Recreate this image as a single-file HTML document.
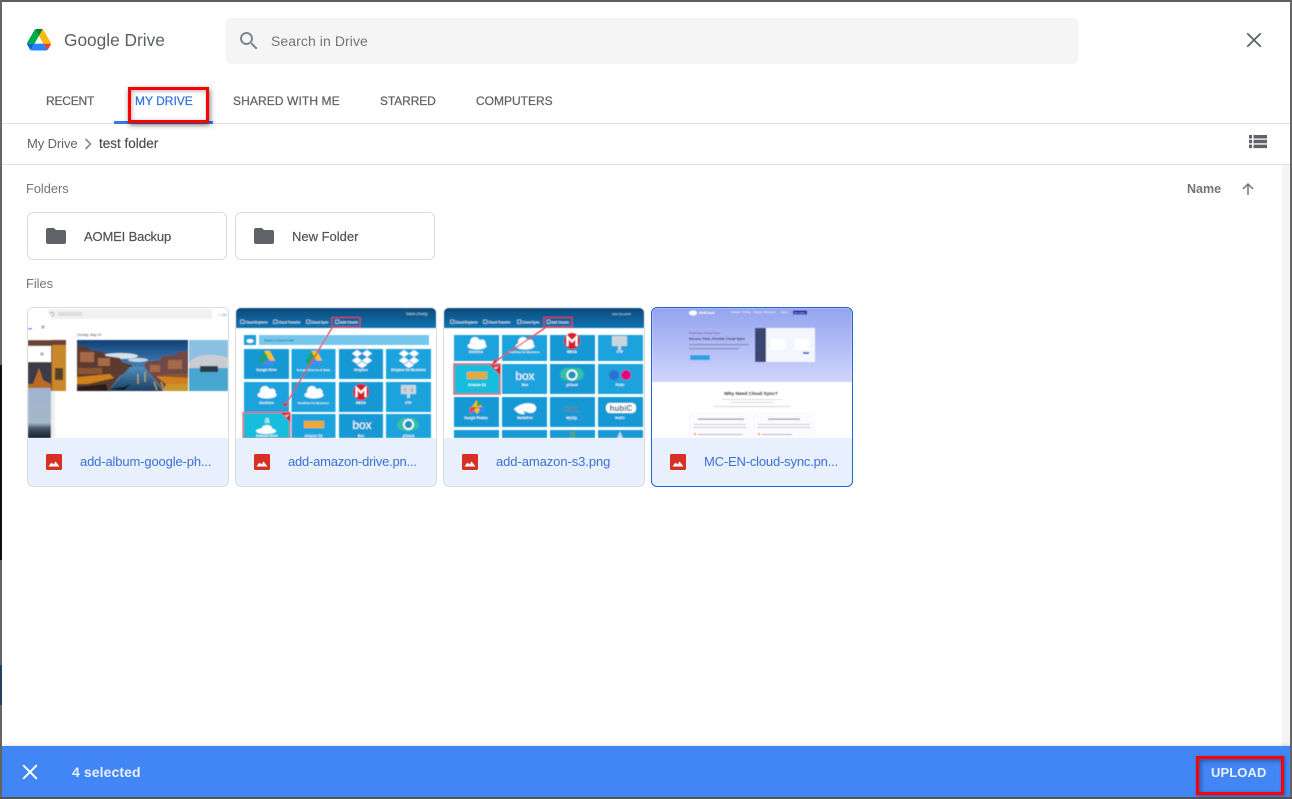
<!DOCTYPE html>
<html>
<head>
<meta charset="utf-8">
<style>
html,body{margin:0;padding:0;width:1292px;height:799px;overflow:hidden;background:#fff;font-family:"Liberation Sans",sans-serif}
.a{position:absolute}
.t{position:absolute;white-space:nowrap;line-height:16px}
.tab{font-size:12px;color:#5f6368;top:93px;font-weight:400;-webkit-text-stroke:.25px #5f6368}
.folder{position:absolute;top:212px;width:198px;height:46px;border:1px solid #dadce0;border-radius:6px;background:#fff}
.card{position:absolute;top:307px;width:200px;height:178px;border:1px solid #dadce0;border-radius:6px;overflow:hidden;background:#e8f0fe}
.card svg.th{position:absolute;left:0;top:0;width:200px;height:130px;background:#fff}
.card .ic{position:absolute;left:18px;top:146px}
.card .nm{position:absolute;left:52px;top:146px;font-size:13px;line-height:16px;color:#3b6fd4;white-space:nowrap}
svg text{font-family:"Liberation Sans",sans-serif}
</style>
</head>
<body>
<!-- window edges -->
<div class="a" style="left:0;top:0;width:1292px;height:2px;background:#5f5f5f"></div>
<div class="a" style="left:0;top:0;width:2px;height:799px;background:#666"></div>
<div class="a" style="left:0;top:365px;width:2px;height:195px;background:#111"></div>
<div class="a" style="left:0;top:665px;width:2px;height:40px;background:#23425f"></div>
<div class="a" style="left:1290px;top:0;width:2px;height:799px;background:#666"></div>
<div class="a" style="left:0;top:797px;width:1292px;height:2px;background:#555"></div>

<!-- header -->
<svg class="a" style="left:27px;top:29px" width="24" height="21.5" viewBox="0 0 87.3 78">
<path d="m6.6 66.85 3.85 6.65c.8 1.4 1.95 2.5 3.3 3.3l13.75-23.8h-27.5c0 1.55.4 3.1 1.2 4.5z" fill="#0066da"/>
<path d="m43.65 25-13.75-23.8c-1.35.8-2.5 1.9-3.3 3.3l-25.4 44a9.06 9.06 0 0 0 -1.2 4.5h27.5z" fill="#00ac47"/>
<path d="m73.55 76.8c1.35-.8 2.5-1.9 3.3-3.3l1.6-2.75 7.65-13.25c.8-1.4 1.2-2.95 1.2-4.5h-27.502l5.852 11.5z" fill="#ea4335"/>
<path d="m43.65 25 13.75-23.8c-1.35-.8-2.9-1.2-4.5-1.2h-18.5c-1.6 0-3.15.45-4.5 1.2z" fill="#00832d"/>
<path d="m59.8 53h-32.3l-13.75 23.8c1.35.8 2.9 1.2 4.5 1.2h50.8c1.6 0 3.15-.45 4.5-1.2z" fill="#2684fc"/>
<path d="m73.4 26.5-12.7-22c-.8-1.4-1.95-2.5-3.3-3.3l-13.75 23.8 16.15 28h27.45c0-1.55-.4-3.1-1.2-4.5z" fill="#ffba00"/>
</svg>
<div class="t" style="left:64px;top:30px;font-size:17.3px;line-height:20px;color:#5a5e63">Google Drive</div>

<div class="a" style="left:226px;top:18px;width:852px;height:46px;background:#f5f5f5;border-radius:4px"></div>
<svg class="a" style="left:237px;top:29px" width="24" height="24" viewBox="0 0 24 24"><path d="M15.5 14h-.79l-.28-.27A6.47 6.47 0 0 0 16 9.5 6.5 6.5 0 1 0 9.5 16c1.61 0 3.09-.59 4.23-1.57l.27.28v.79l5 4.99L20.49 19l-4.99-5zm-6 0C7.01 14 5 11.99 5 9.5S7.01 5 9.5 5 14 7.01 14 9.5 11.99 14 9.5 14z" fill="#80868b"/></svg>
<div class="t" style="left:271px;top:33px;font-size:14px;color:#70757a;letter-spacing:.08px">Search in Drive</div>
<svg class="a" style="left:1244px;top:30px" width="20" height="20" viewBox="0 0 20 20"><path d="M3.2 3.2 16.8 16.8M16.8 3.2 3.2 16.8" stroke="#5f6368" stroke-width="1.8" fill="none"/></svg>

<!-- tabs -->
<div class="t tab" style="left:46px;letter-spacing:-.2px">RECENT</div>
<div class="t tab" style="left:135px;color:#2f72e0;-webkit-text-stroke:.25px #2f72e0">MY DRIVE</div>
<div class="t tab" style="left:233px;letter-spacing:.1px">SHARED WITH ME</div>
<div class="t tab" style="left:380px;letter-spacing:-.1px">STARRED</div>
<div class="t tab" style="left:476px">COMPUTERS</div>
<div class="a" style="left:2px;top:123px;width:1288px;height:1px;background:#e0e0e0"></div>
<div class="a" style="left:114px;top:121px;width:99px;height:3px;background:#3b78e7"></div>

<!-- breadcrumb -->
<div class="t" style="left:27px;top:136px;font-size:13px;color:#5f6368;letter-spacing:-.1px">My Drive</div>
<svg class="a" style="left:83px;top:137px" width="10" height="14" viewBox="0 0 10 14"><path d="M2.5 2 7.5 7 2.5 12" stroke="#80868b" stroke-width="1.6" fill="none"/></svg>
<div class="t" style="left:99px;top:136px;font-size:13.5px;color:#4a4e52;-webkit-text-stroke:.2px #4a4e52">test folder</div>
<svg class="a" style="left:1249px;top:135px" width="18" height="14" viewBox="0 0 18 14"><path d="M0 0h3v3.500H0zM4.500 0H18v3.500H4.500zM0 4.800h3v3.500H0zM4.500 4.800H18v3.500H4.500zM0 9.600h3v3.500H0zM4.500 9.600H18v3.500H4.500z" fill="#5f6368"/></svg>
<div class="a" style="left:2px;top:164px;width:1288px;height:1px;background:#e0e0e0"></div>

<!-- scrollbar strip -->
<div class="a" style="left:1282px;top:165px;width:8px;height:581px;background:#f4f4f4"></div>

<!-- sections -->
<div class="t" style="left:26px;top:181px;font-size:12.8px;color:#70757a">Folders</div>
<div class="t" style="left:1187px;top:181px;font-size:12.5px;font-weight:700;color:#70757a">Name</div>
<svg class="a" style="left:1240px;top:181px" width="16" height="16" viewBox="0 0 16 16"><path d="M8 14V3M3 8l5-5 5 5" stroke="#70757a" stroke-width="1.5" fill="none"/></svg>

<div class="folder" style="left:27px"></div>
<div class="folder" style="left:235px"></div>
<svg class="a" style="left:46px;top:228px" width="20" height="16" viewBox="0 0 20 16"><path d="M2 0h6l2 2h8a2 2 0 0 1 2 2v10a2 2 0 0 1-2 2H2a2 2 0 0 1-2-2V2a2 2 0 0 1 2-2z" fill="#5f6368"/></svg>
<svg class="a" style="left:254px;top:228px" width="20" height="16" viewBox="0 0 20 16"><path d="M2 0h6l2 2h8a2 2 0 0 1 2 2v10a2 2 0 0 1-2 2H2a2 2 0 0 1-2-2V2a2 2 0 0 1 2-2z" fill="#5f6368"/></svg>
<div class="t" style="left:84px;top:229px;font-size:13px;color:#4f5357;-webkit-text-stroke:.2px #4f5357;letter-spacing:-.15px">AOMEI Backup</div>
<div class="t" style="left:292px;top:229px;font-size:13px;color:#4f5357;-webkit-text-stroke:.2px #4f5357">New Folder</div>

<div class="t" style="left:26px;top:276px;font-size:12.8px;color:#70757a">Files</div>

<svg width="0" height="0" style="position:absolute"><defs>
<filter id="b" x="-5%" y="-5%" width="110%" height="110%"><feGaussianBlur stdDeviation=".4"/></filter>
<linearGradient id="hd" x1="0" y1="0" x2="0" y2="1"><stop offset="0" stop-color="#0a4a7a"/><stop offset="1" stop-color="#0f74b3"/></linearGradient>
<linearGradient id="pv" x1="0" y1="0" x2="0" y2="1"><stop offset="0" stop-color="#94a4ef"/><stop offset="1" stop-color="#d0d4fc"/></linearGradient>
<linearGradient id="sk" x1="0" y1="0" x2="0" y2="1"><stop offset="0" stop-color="#123f78"/><stop offset=".45" stop-color="#3f78ad"/><stop offset="1" stop-color="#5f8fb6"/></linearGradient>
<linearGradient id="wt" x1="0" y1="0" x2="0" y2="1"><stop offset="0" stop-color="#4f8fbd"/><stop offset="1" stop-color="#1b3f60"/></linearGradient>
<linearGradient id="gr" x1="0" y1="0" x2="0" y2="1"><stop offset="0" stop-color="#9fb5cf"/><stop offset=".7" stop-color="#a6b7c9"/><stop offset=".8" stop-color="#4b5a6b"/><stop offset="1" stop-color="#14202e"/></linearGradient>
</defs></svg>

<!-- card 1 -->
<div class="card" style="left:27px">
<svg class="th" viewBox="0 0 200 130"><g filter="url(#b)">
<rect x="20" y="1" width="164" height="10" fill="#f1f1f1"/>
<circle cx="24" cy="6" r="1.800" fill="none" stroke="#777" stroke-width=".7"/>
<rect x="30" y="4" width="24" height="4" fill="#ddd"/>
<text x="190" y="8" font-size="4" fill="#4a86e8">+ cre</text>
<text x="49" y="28" font-size="3.400" fill="#555">Sunday, May 24</text>
<!-- venice -->
<rect x="49" y="32" width="111" height="51" fill="url(#sk)"/>
<ellipse cx="92" cy="48" rx="18" ry="3" fill="#d5e2ec"/>
<ellipse cx="110" cy="52" rx="10" ry="2" fill="#c4d6e4"/>
<path d="M49 83V37L60 39 62 42 75 44 78 48 92 50 94 54 104 57V60L92 68 80 83z" fill="#5c3a2e"/>
<path d="M160 83V43L150 44 148 47 135 48 132 52 118 54 116 58 122 66 136 83z" fill="#6f4a44"/>
<path d="M52 44h14v10H52zM70 50h12v8H70zM140 52h14v9h-14zM122 57h10v7h-10z" fill="#a4694a"/>
<path d="M50 60h24v6H50zM136 66h24v5h-24z" fill="#8a5530"/>
<path d="M102 59 115 59 135 83H80z" fill="url(#wt)"/>
<path d="M49 69 82 66 86 70 60 76 49 76zM128 68 160 70V76L138 76z" fill="#d0801f"/>
<path d="M49 79 78 76 80 83H49z" fill="#2b1e1c"/>
<path d="M138 76h22v7h-25z" fill="#c9962d"/>
<path d="M126 74l3 8M133 74l3 8M110 66v10M117 64v10" stroke="#c7a24a" stroke-width="1.200"/>
<path d="M82 81l14-2 7-3-7 6z" fill="#101820"/>
<!-- rialto -->
<rect x="161" y="32" width="39" height="51" fill="#8bc0e2"/>
<path d="M161 54c10-9 24-9 39-4v13h-39z" fill="#c9cdd2"/>
<path d="M161 60h39v23h-39z" fill="#49a6d0"/>
<path d="M172 58h18v6h-18z" fill="#2b3b49"/>
<!-- left stack -->
<rect x="0" y="32" width="38" height="51" fill="#6c4336"/>
<rect x="24" y="37" width="14" height="46" fill="#c9892b"/>
<rect x="27" y="60" width="8" height="12" fill="#574126"/>
<rect x="0" y="6" width="23" height="26" fill="#fff"/>
<rect x="0" y="0" width="20" height="6" fill="#fff"/>
<rect x="23" y="83" width="4" height="47" fill="#eee"/>
<rect x="0" y="38" width="23" height="16" fill="#fff"/>
<rect x="0" y="54" width="23" height="26" fill="#3a3a48"/>
<path d="M5 76 11 60 15 72 23 76V80H0V76z" fill="#bb6a24"/>
<rect x="0" y="80" width="23" height="50" fill="url(#gr)"/>
<path d="M13.500 17.500l3 3M16.500 17.500l-3 3M12.500 44.500l3 3M15.500 44.500l-3 3" stroke="#666" stroke-width=".8"/>
<rect x="0" y="20" width="4" height="1.500" fill="#4a86e8"/>
</g></svg>
<svg class="ic" width="16" height="16" viewBox="0 0 16 16"><rect width="16" height="16" rx="1.5" fill="#d93025"/><path d="M2.500 12.500 5.500 8.500 7.500 10.500 9.500 7.500 13.500 12.500z" fill="#fff"/></svg>
<div class="nm" style="letter-spacing:-.14px">add-album-google-ph...</div>
</div>

<!-- card 2 -->
<div class="card" style="left:235px">
<svg class="th" viewBox="0 0 200 130"><g filter="url(#b)">
<rect width="200" height="20" fill="url(#hd)"/>
<g fill="none" stroke="#dcecf7" stroke-width=".6"><rect x="4.500" y="12" width="3.500" height="3.500"/><rect x="37.500" y="12" width="3.500" height="3.500"/><rect x="70.500" y="12" width="3.500" height="3.500"/><rect x="99.500" y="12" width="3.500" height="3.500"/></g>
<g font-size="3.200" fill="#dcecf7" font-weight="700">
<text x="9" y="15.500">Cloud Explorer</text><text x="42" y="15.500">Cloud Transfer</text><text x="75" y="15.500">Cloud Sync</text><text x="104" y="15.500">Add Clouds</text></g>
<text x="170" y="7" font-size="3.200" fill="#cfe3f2">Satoko (Yearly)</text>
<rect x="96" y="9.500" width="28" height="9.500" fill="none" stroke="#dc2f4c" stroke-width="1.100"/>
<rect x="8" y="27" width="12" height="10" fill="#1f9ddb"/>
<ellipse cx="14" cy="33" rx="3.500" ry="2" fill="#fff"/>
<rect x="23" y="27" width="170" height="10" fill="#76c7ee"/>
<text x="28" y="33.500" font-size="3.200" fill="#135a82">Select a cloud to add</text>
<g fill="#1598d4">
<rect x="8" y="41" width="45" height="30"/><rect x="55.500" y="41" width="44" height="30" fill="#1ca2dd"/><rect x="103" y="41" width="44" height="30"/><rect x="150" y="41" width="45" height="30" fill="#1ca2dd"/>
<rect x="8" y="74" width="45" height="30" fill="#1ca2dd"/><rect x="55.500" y="74" width="44" height="30" fill="#1ca2dd"/><rect x="103" y="74" width="44" height="30"/><rect x="150" y="74" width="45" height="30" fill="#1ca2dd"/>
<rect x="55.500" y="106" width="44" height="24" fill="#1ca2dd"/><rect x="103" y="106" width="44" height="24"/><rect x="150" y="106" width="45" height="24" fill="#1ca2dd"/></g>
<!-- drive icons -->
<g transform="translate(23 43) scale(.185)"><path d="M29 0 0 52l14 26L43.600 25z" fill="#1fa463"/><path d="M29 0H58L87 52H58z" fill="#ffc21f"/><path d="M14 78H73L87 52H29z" fill="#4688f1"/></g>
<g transform="translate(70 43) scale(.185)"><path d="M29 0 0 52l14 26L43.600 25z" fill="#1fa463"/><path d="M29 0H58L87 52H58z" fill="#ffc21f"/><path d="M14 78H73L87 52H29z" fill="#4688f1"/></g>
<!-- dropbox -->
<g fill="#fff" transform="translate(126 51)"><path d="M-5-9 0-5.500-5-2-10-5.500zM5-9 10-5.500 5-2 0-5.500zM-5-2 0 1.500-5 5-10 1.500zM5-2 10 1.500 5 5 0 1.500zM-5 6 0 2.500 5 6 0 9z"/></g>
<g fill="#fff" transform="translate(173 51)"><path d="M-5-9 0-5.500-5-2-10-5.500zM5-9 10-5.500 5-2 0-5.500zM-5-2 0 1.500-5 5-10 1.500zM5-2 10 1.500 5 5 0 1.500zM-5 6 0 2.500 5 6 0 9z"/></g>
<!-- clouds -->
<g fill="#fff"><ellipse cx="31" cy="87" rx="9.500" ry="3.500"/><circle cx="29" cy="83" r="5"/><circle cx="36" cy="84" r="3.500"/>
<ellipse cx="78" cy="87" rx="9.500" ry="3.500"/><circle cx="76" cy="83" r="5"/><circle cx="83" cy="84" r="3.500"/></g>
<circle cx="125" cy="84" r="8" fill="#d81e2c"/><path d="M120.500 89v-9l4.500 4.500 4.500-4.500v9" stroke="#fff" stroke-width="2" fill="none"/>
<rect x="165" y="77" width="15" height="9" fill="#c9d7dd"/><rect x="171" y="86" width="3" height="4" fill="#c9d7dd"/><path d="M169 80v4M176 80v4" stroke="#7a8f98" stroke-width="1"/>
<path d="M168 110c-3 0-7 4-7 7 0 4 4 6 11 6s11-2 11-6c0-3-4-7-7-7z" fill="#35bfa6"/><circle cx="172.500" cy="116.500" r="5.500" fill="#fff"/><circle cx="172.500" cy="116.500" r="3.800" fill="#1a93c4"/>
<g font-size="3.300" fill="#fff" font-weight="700" text-anchor="middle">
<text x="30.500" y="63">Google Drive</text><text x="77.500" y="63" font-size="2.900">Google Drive for G Suite</text><text x="125" y="63">Dropbox</text><text x="172.500" y="63">Dropbox for Business</text>
<text x="30.500" y="96">OneDrive</text><text x="77.500" y="96" font-size="2.900">OneDrive for Business</text><text x="125" y="96">MEGA</text><text x="172.500" y="96">FTP</text>
<text x="77.500" y="129">Amazon S3</text><text x="125" y="129">Box</text><text x="172.500" y="129">pCloud</text></g>
<text x="126" y="121" font-size="12" fill="#fff" text-anchor="middle">box</text>
<rect x="68" y="113" width="20" height="7" fill="#f0a832"/>
<!-- selected -->
<rect x="7" y="104.500" width="47" height="26" fill="#13bede" stroke="#f0606c" stroke-width="1.300"/>
<path d="M45 105h9v9z" fill="#d81e2c"/><path d="M49 107l1.500 1.500 2-2" stroke="#fff" stroke-width=".8" fill="none"/>
<ellipse cx="30" cy="123" rx="10" ry="3" fill="#fff"/><ellipse cx="31" cy="120" rx="5" ry="3" fill="#fff"/>
<text x="31" y="115" font-size="9" fill="#fff" text-anchor="middle">a</text>
<text x="31" y="129" font-size="3.300" fill="#fff" text-anchor="middle" font-weight="700">Amazon Drive</text>
<path d="M96 20 50 96" stroke="#f01818" stroke-width="1.100"/><path d="M47 100l1-5.500 3.200 2z" fill="#e01b1b"/>
</g></svg>
<svg class="ic" width="16" height="16" viewBox="0 0 16 16"><rect width="16" height="16" rx="1.5" fill="#d93025"/><path d="M2.500 12.500 5.500 8.500 7.500 10.500 9.500 7.500 13.500 12.500z" fill="#fff"/></svg>
<div class="nm" style="letter-spacing:-.23px">add-amazon-drive.pn...</div>
</div>

<!-- card 3 -->
<div class="card" style="left:443px">
<svg class="th" viewBox="0 0 200 130"><g filter="url(#b)">
<rect width="200" height="20" fill="url(#hd)"/>
<g fill="none" stroke="#dcecf7" stroke-width=".6"><rect x="6.500" y="12" width="3.500" height="3.500"/><rect x="39.500" y="12" width="3.500" height="3.500"/><rect x="73.500" y="12" width="3.500" height="3.500"/><rect x="103" y="12" width="3" height="3.500"/></g>
<g font-size="3.200" fill="#dcecf7" font-weight="700">
<text x="11" y="15.500">Cloud Explorer</text><text x="44" y="15.500">Cloud Transfer</text><text x="78" y="15.500">Cloud Sync</text><text x="107" y="15.500">Add Clouds</text></g>
<text x="168" y="7" font-size="3" fill="#cfe3f2">Add Clouds44</text>
<rect x="100" y="9.500" width="28" height="9.500" fill="none" stroke="#e81a28" stroke-width="1.100"/>
<g fill="#1598d4">
<rect x="10" y="27" width="45" height="26" fill="#1ca2dd"/><rect x="58" y="27" width="45" height="26" fill="#1ca2dd"/><rect x="106" y="27" width="45" height="26"/><rect x="154" y="27" width="45" height="26" fill="#1ca2dd"/>
<rect x="58" y="56" width="45" height="30" fill="#1ca2dd"/><rect x="106" y="56" width="45" height="30"/><rect x="154" y="56" width="45" height="30" fill="#1ca2dd"/>
<rect x="10" y="89" width="45" height="30"/><rect x="58" y="89" width="45" height="30"/><rect x="106" y="89" width="45" height="30"/><rect x="154" y="89" width="45" height="30"/>
<rect x="10" y="122" width="45" height="8"/><rect x="58" y="122" width="45" height="8"/><rect x="106" y="122" width="45" height="8"/><rect x="154" y="122" width="45" height="8"/></g>
<g fill="#fff"><ellipse cx="33" cy="38" rx="9.500" ry="3.500"/><circle cx="31" cy="34" r="5"/><circle cx="38" cy="35" r="3.500"/>
<ellipse cx="81" cy="38" rx="9.500" ry="3.500"/><circle cx="79" cy="34" r="5"/><circle cx="86" cy="35" r="3.500"/>
<path d="M70 101c5-5 13-7 19-5 5 2 4 9-3 9l-7-2 2 3c-5 1-9-2-11-5z"/></g>
<circle cx="128" cy="33" r="8" fill="#d81e2c"/><path d="M123.500 38v-9l4.500 4.500 4.500-4.500v9" stroke="#fff" stroke-width="2" fill="none"/>
<rect x="168" y="28" width="15" height="10" fill="#c9d7dd"/><rect x="174" y="38" width="3" height="4" fill="#c9d7dd"/>
<rect x="10" y="56" width="46" height="30" fill="#13bede" stroke="#e2505c" stroke-width="1.300"/>
<path d="M46 57h10v10z" fill="#d81e2c"/><path d="M50.500 59l1.500 1.500 2-2" stroke="#fff" stroke-width=".8" fill="none"/>
<rect x="23" y="64" width="20" height="7" fill="#eaa836"/>
<text x="81" y="72" font-size="12" fill="#fff" text-anchor="middle">box</text>
<path d="M122 60c-3 0-6 4-6 7 0 4 5 6 12 6s12-2 12-6c0-3-3-7-6-7z" fill="#35bfa6"/><circle cx="128" cy="67" r="5.500" fill="#fff"/><circle cx="128" cy="67" r="3.800" fill="#1a93c4"/>
<circle cx="170" cy="67" r="5" fill="#2d6fd0"/><circle cx="182" cy="67" r="5" fill="#e6007a"/>
<path d="M33 92l5 7-5 7-5-7z" fill="#fbbc05"/><path d="M33 99h7v7z" fill="#4285f4"/><path d="M33 99h-7v7z" fill="#ea4335"/><path d="M33 92v7l6-3z" fill="#34a853"/>
<text x="128" y="104" font-size="8" fill="#5e8a9b" text-anchor="middle" font-weight="700">SQL</text>
<rect x="162" y="95" width="30" height="10" rx="4" fill="#fff"/><text x="177" y="103" font-size="8" fill="#20517a" text-anchor="middle" font-weight="700">hubiC</text>
<path d="M127 124v6M130 123v7" stroke="#6aa84f" stroke-width="1.500"/>
<path d="M176 123l3 7h-6z" fill="#bcdcef"/>
<g font-size="3.300" fill="#fff" font-weight="700" text-anchor="middle">
<text x="32" y="45">OneDrive</text><text x="80" y="45" font-size="2.900">OneDrive for Business</text><text x="128" y="45">MEGA</text><text x="176" y="45">FTP</text>
<text x="33" y="78">Amazon S3</text><text x="81" y="78">Box</text><text x="128" y="78">pCloud</text><text x="176" y="78">Flickr</text>
<text x="32" y="111">Google Photos</text><text x="81" y="111">MediaFire</text><text x="128" y="111">MySQL</text><text x="176" y="111">HubiC</text></g>
<path d="M101 20 52 53" stroke="#f01818" stroke-width="1.100"/><path d="M48 56l3-5 2.200 3z" fill="#e01b1b"/>
</g></svg>
<svg class="ic" width="16" height="16" viewBox="0 0 16 16"><rect width="16" height="16" rx="1.5" fill="#d93025"/><path d="M2.500 12.500 5.500 8.500 7.500 10.500 9.500 7.500 13.500 12.500z" fill="#fff"/></svg>
<div class="nm" style="letter-spacing:-.08px">add-amazon-s3.png</div>
</div>

<!-- card 4 -->
<div class="card" style="left:651px;border-color:#1a66d6">
<svg class="th" viewBox="0 0 200 130"><g filter="url(#b)">
<rect width="200" height="74" fill="url(#pv)"/>
<ellipse cx="41" cy="5" rx="4" ry="2.500" fill="#fff"/><text x="47" y="6" font-size="3.200" fill="#fff" font-weight="700">MultCloud</text>
<g font-size="2.400" fill="#fff"><text x="79" y="5">Features</text><text x="91" y="5">Pricing</text><text x="102" y="5">Support</text><text x="112" y="5">Resources</text><text x="129" y="5">Sign in</text></g>
<rect x="141" y="2.500" width="14" height="4" fill="#1d1fa0"/><text x="142" y="5.500" font-size="2.200" fill="#fff">Get started</text>
<text x="37" y="26" font-size="3" fill="#44496e">MultCloud 1Cloud Sync</text>
<text x="37" y="32" font-size="3.500" fill="#24284a" font-weight="700">Secure, Fast, Flexible Cloud Sync</text>
<rect x="37" y="36" width="60" height="1.300" fill="#8a8fc0"/><rect x="37" y="40" width="50" height="1.300" fill="#8a8fc0"/>
<rect x="38" y="47" width="20" height="5" rx="1" fill="#2aa5e3"/>
<rect x="103" y="20" width="60" height="34" fill="#f4f6fd"/><rect x="103" y="20" width="11" height="34" fill="#3a4572"/>
<rect x="119" y="31" width="14" height="11" fill="#fff"/><rect x="143" y="31" width="14" height="11" fill="#fff"/><rect x="151" y="44" width="6" height="2" fill="#3a6fd8"/>
<text x="99" y="87" font-size="4.800" fill="#33363f" text-anchor="middle" font-weight="700">Why Need Cloud Sync?</text>
<rect x="70" y="91" width="60" height="1" fill="#dcdce0"/><rect x="78" y="94" width="44" height="1" fill="#dcdce0"/><rect x="62" y="98" width="76" height="1" fill="#d6d6dc"/>
<rect x="38" y="105" width="60" height="25" fill="#fbfbfd" stroke="#f0f0f4" stroke-width=".5"/>
<rect x="102" y="105" width="60" height="25" fill="#fbfbfd" stroke="#f0f0f4" stroke-width=".5"/>
<rect x="46" y="110.500" width="46" height="1.200" fill="#8d8f99"/><rect x="116" y="110.500" width="32" height="1.200" fill="#8d8f99"/>
<rect x="42" y="116" width="52" height="1" fill="#c9c9d0"/><rect x="106" y="116" width="52" height="1" fill="#c9c9d0"/>
<rect x="42" y="119" width="52" height="1" fill="#c9c9d0"/><rect x="106" y="119" width="52" height="1" fill="#c9c9d0"/>
<rect x="46" y="126" width="44" height="1" fill="#a9a9c9"/><rect x="110" y="126" width="30" height="1" fill="#a9a9c9"/>
<circle cx="43" cy="126" r="1.200" fill="#e4b13a"/><circle cx="107" cy="126" r="1.200" fill="#e4b13a"/>
</g></svg>
<svg class="ic" width="16" height="16" viewBox="0 0 16 16"><rect width="16" height="16" rx="1.5" fill="#d93025"/><path d="M2.500 12.500 5.500 8.500 7.500 10.500 9.500 7.500 13.500 12.500z" fill="#fff"/></svg>
<div class="nm" style="letter-spacing:-.18px">MC-EN-cloud-sync.pn...</div>
</div>

<!-- bottom bar -->
<div class="a" style="left:2px;top:746px;width:1288px;height:51px;background:#4285f4;box-shadow:0 -1px 3px rgba(0,0,0,.12)"></div>
<svg class="a" style="left:20px;top:762px" width="20" height="20" viewBox="0 0 20 20"><path d="M3.200 3.200 16.800 16.800M16.800 3.200 3.200 16.800" stroke="#fff" stroke-width="2" fill="none"/></svg>
<div class="t" style="left:72px;top:764px;font-size:14px;font-weight:700;color:#e8f0fe;letter-spacing:.1px">4 selected</div>
<div class="t" style="left:1211px;top:765px;font-size:13px;font-weight:700;color:#e8f0fe;letter-spacing:.1px">UPLOAD</div>

<!-- annotation boxes -->
<div class="a" style="left:128px;top:87px;width:75px;height:30px;border:3px solid #f00;box-shadow:1px 2px 5px rgba(0,0,0,.55),inset 1px 1px 4px rgba(0,0,0,.3)"></div>
<div class="a" style="left:1196px;top:756px;width:82px;height:33px;border:3px solid #f00;box-shadow:1px 1px 3px rgba(0,0,0,.35),inset 2px 2px 5px rgba(0,0,40,.35)"></div>
</body>
</html>
